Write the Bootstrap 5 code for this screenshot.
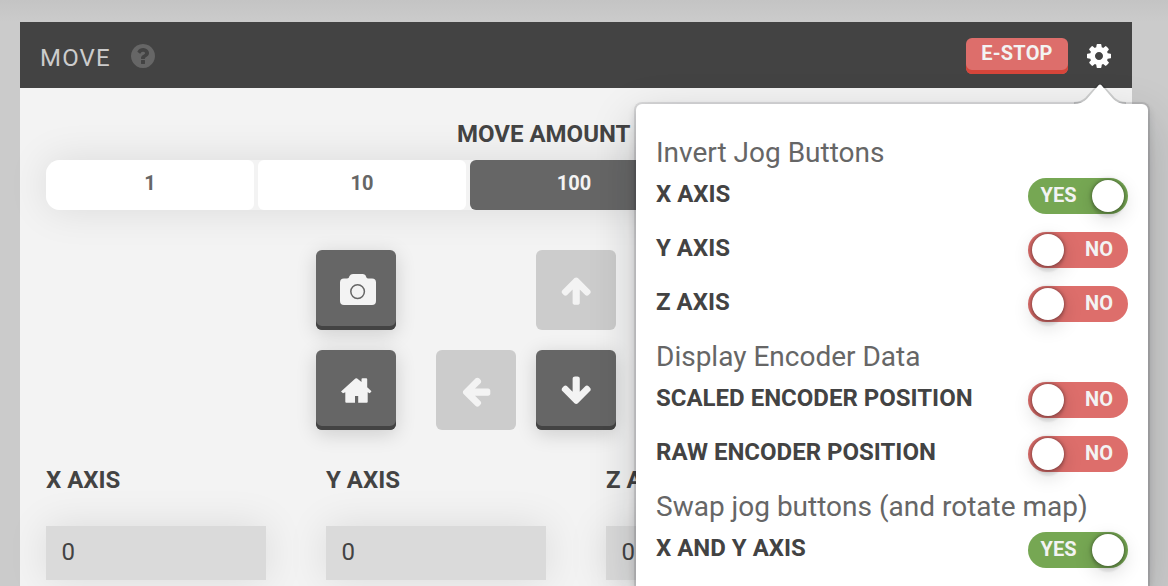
<!DOCTYPE html>
<html lang="en">
<head>
<meta charset="utf-8">
<meta name="viewport" content="width=device-width, initial-scale=1">
<title>Move</title>
<link rel="stylesheet" href="https://cdn.jsdelivr.net/npm/bootstrap@5.3.0/dist/css/bootstrap.min.css">
<style>
body{font-family:Roboto,"Liberation Sans",sans-serif;background:linear-gradient(#c4c4c4,#cbcbcb 22px,#cbcbcb);color:#434343;height:586px;font-size:24px;line-height:36px}
.widget{width:1112px;height:564px;margin:22px 0 0 20px;background:#f3f3f3}
.widget-header{height:66px;background:#434343;padding:0 21px 0 20px}
.widget-title{color:#ccc;letter-spacing:1.2px;padding-top:5px}
.help{margin:2px 0 0 20px}
.estop{width:102px;height:36px;border:0;border-radius:6px;background:#dd6e6b;box-shadow:inset 0 -4px 0 #d6453a;color:#f3f3f3;font-size:20px;font-weight:700;line-height:30px;letter-spacing:.2px;padding:0 0 6px;margin-top:1px}
.gear{position:relative;margin:2px 0 0 19px;width:24px;height:24px}
.gear>svg{display:block}
.widget-body{padding:0 26px}
.amount-title{padding:28px 0 0 411px;font-weight:700}
.amounts{gap:4px;margin-top:8px;width:1056px;box-shadow:0 0 40px rgba(0,0,0,.1);border-radius:14px}
.amount{flex:1;height:50px;background:#fff;border:0;border-radius:6px;color:#666;font-size:20px;font-weight:700;line-height:46px;text-align:center}
.amount:first-child{border-radius:14px 6px 6px 14px}
.amount:last-child{border-radius:6px 14px 14px 6px}
.amount.chosen{background:#666;color:#f3f3f3}
.jog{display:grid;grid-template-columns:80px 0 80px 80px 80px;gap:20px;margin:40px 0 0 270px}
.jog-btn{width:80px;height:80px;border:0;padding:0;border-radius:6px;background:#666;box-shadow:inset 0 -4px 0 #434343,0 4px 20px rgba(0,0,0,.16);color:#f3f3f3}
.jog-btn svg{display:block}
.jog-btn.off{background:#ccc;box-shadow:none}
.axes{gap:60px;margin-top:32px}
.axis{width:220px;font-weight:700}
.axis-value{height:54px;margin-top:28px;background:#dadada;box-shadow:0 0 40px rgba(0,0,0,.1);font-weight:400;padding-left:15.5px;line-height:52px}
.settings{position:absolute;left:-451px;top:60px;width:512px;height:482px;background:#fff;border-radius:6px 6px 0 0;padding:14px 20px 0;box-shadow:0 0 0 2px rgba(16,22,26,.1),0 4px 8px rgba(16,22,26,.2),0 16px 48px rgba(16,22,26,.2);z-index:5}
.tip{position:absolute;top:-22px;right:17px;z-index:1}
.settings h2{font-size:28px;font-weight:400;line-height:42px;margin:14px 0 4px;color:#666}
.settings .setting+h2{margin-top:-4px}
.setting{height:36px;font-weight:700;margin-bottom:18px}
.setting>span{line-height:32px}
.setting:last-child{margin-bottom:0}
.sw{position:relative;width:100px;height:36px;border-radius:18px;background:#dd6e6b;color:#f3f3f3;font-size:20px;font-weight:700;line-height:34px;padding:0 15px;text-align:right}
.sw::after{content:"";position:absolute;left:4px;top:2px;width:32px;height:32px;border-radius:50%;background:#fff;box-shadow:0 0 4px rgba(0,0,0,.5),0 6px 2px rgba(0,0,0,.07),0 6px 20px rgba(0,0,0,.16)}
.sw.yes{background:#76a753;text-align:left;padding-left:12.5px}
.sw.yes::after{left:64px}
</style>
<script src="https://cdn.jsdelivr.net/npm/bootstrap@5.3.0/dist/js/bootstrap.bundle.min.js"></script>
</head>
<body class="overflow-hidden">
<svg width="0" height="0" class="position-absolute">
<symbol id="arrow" viewBox="0 0 1792 1792"><path fill="currentColor" d="M1675 971q0 51-37 90l-75 75q-38 38-91 38-54 0-90-38l-294-293v704q0 52-37.500 84.500t-90.500 32.500h-128q-53 0-90.500-32.500t-37.500-84.500v-704l-294 293q-36 38-90 38t-90-38l-75-75q-38-38-38-90 0-53 38-91l651-651q35-37 90-37 54 0 91 37l651 651q37 39 37 91z"/></symbol>
</svg>
<main class="widget">
<header class="widget-header d-flex align-items-center">
<span class="widget-title">MOVE</span>
<svg class="help" width="24" height="24" viewBox="128 128 1536 1536"><path fill="#666" d="M1024 1376v-192q0-14-9-23t-23-9h-192q-14 0-23 9t-9 23v192q0 14 9 23t23 9h192q14 0 23-9t9-23zm256-672q0-88-55.500-163t-138.500-116-170-41q-243 0-371 213-15 24 8 42l132 100q7 6 19 6 16 0 25-12 53-68 86-92 34-24 86-24 48 0 85.500 26t37.500 59q0 38-20 61t-68 45q-63 28-115.500 86.500t-52.500 125.500v36q0 14 9 23t23 9h192q14 0 23-9t9-23q0-19 21.500-49.500t54.500-49.500q32-18 49-28.500t46-35 44.500-48 28-60.500 12.500-81zm384 192q0 209-103 385.500t-279.500 279.500-385.500 103-385.500-103-279.500-279.500-103-385.500 103-385.500 279.500-279.500 385.500-103 385.500 103 279.500 279.500 103 385.500z"/></svg>
<button class="estop ms-auto">E-STOP</button>
<div class="gear">
<svg width="24" height="24" viewBox="128 128 1536 1536"><path fill="#fff" d="M1152 896q0-106-75-181t-181-75-181 75-75 181 75 181 181 75 181-75 75-181zm512-109v222q0 12-8 23t-20 13l-185 28q-19 54-39 91 35 50 107 138 10 12 10 25t-9 23q-27 37-99 108t-94 71q-12 0-26-9l-138-108q-44 23-91 38-16 136-29 186-7 28-36 28h-222q-14 0-24.500-8.500t-11.500-21.500l-28-184q-49-16-90-37l-141 107q-10 9-25 9-14 0-25-11-126-114-165-168-7-10-7-23 0-12 8-23 15-21 51-66.500t54-70.500q-27-50-41-99l-183-27q-13-2-21-12.500t-8-23.500v-222q0-12 8-23t19-13l186-28q14-46 39-92-40-57-107-138-10-12-10-24 0-10 9-23 26-36 98.500-107.500t94.500-71.500q13 0 26 10l138 107q44-23 91-38 16-136 29-186 7-28 36-28h222q14 0 24.500 8.500t11.500 21.500l28 184q49 16 90 37l142-107q9-9 24-9 13 0 25 10 129 119 165 170 7 8 7 22 0 12-8 23-15 21-51 66.500t-54 70.500q26 50 41 98l183 28q13 2 21 12.500t8 23.500z"/></svg>
<section class="settings">
<svg class="tip" width="62" height="24" viewBox="0 0 62 24"><path d="M5 21Q12 21 17 16.500L28.300 4Q31 1 33.700 4L45 16.500Q50 21 57 21" fill="none" stroke="#10161a" stroke-opacity=".17" stroke-width="2"/><path d="M5 24V22Q13 22 18 17L28.500 4.500Q31 .500 33.500 4.500L44 17Q49 22 57 22V24Z" fill="#fff"/></svg>
<h2>Invert Jog Buttons</h2>
<div class="setting d-flex justify-content-between"><span>X AXIS</span><div class="sw yes">YES</div></div>
<div class="setting d-flex justify-content-between"><span>Y AXIS</span><div class="sw">NO</div></div>
<div class="setting d-flex justify-content-between"><span>Z AXIS</span><div class="sw">NO</div></div>
<h2>Display Encoder Data</h2>
<div class="setting d-flex justify-content-between"><span>SCALED ENCODER POSITION</span><div class="sw">NO</div></div>
<div class="setting d-flex justify-content-between"><span>RAW ENCODER POSITION</span><div class="sw">NO</div></div>
<h2>Swap jog buttons (and rotate map)</h2>
<div class="setting d-flex justify-content-between"><span>X AND Y AXIS</span><div class="sw yes">YES</div></div>
</section>
</div>
</header>
<div class="widget-body">
<div class="amount-title">MOVE AMOUNT</div>
<div class="amounts d-flex"><div class="amount">1</div><div class="amount">10</div><div class="amount chosen">100</div><div class="amount"></div><div class="amount"></div></div>
<div class="jog">
<button class="jog-btn" aria-label="Photo"><svg width="80" height="80"><path d="M28 28.500h3q2 0 2.500-2.500 1-2 3.500-2h9.500q3 0 3.500 2.500.5 2 2 2h4q4 0 4 4V51q0 4-4 4H28q-4 0-4-4V32.500q0-4 4-4z" fill="#f3f3f3"/><circle cx="41.600" cy="41.600" r="6.800" fill="none" stroke="#666" stroke-width="1.500"/></svg></button>
<span></span><span></span>
<button class="jog-btn off" aria-label="Up"><svg width="80" height="80"><use href="#arrow" x="23.500" y="23.800" width="33.400" height="33.400"/></svg></button>
<span></span>
<button class="jog-btn" aria-label="Home"><svg width="80" height="80"><path d="M25 41.500 38.500 29.200Q40.300 27.500 42.100 29.200L45.500 32V29.300Q45.500 28.300 46.500 28.300H50.200Q51.200 28.300 51.200 29.300V37.300L55.500 41.300 53.800 43.300 51.700 42.300V51.700Q51.700 52.700 50.700 52.700H42.200V46H39V52.700H30.300Q29.300 52.700 29.300 51.700V42.300L27 43.300Z" fill="#f3f3f3"/></svg></button>
<span></span>
<button class="jog-btn off" aria-label="Left"><svg width="80" height="80"><use href="#arrow" x="23.500" y="23.500" width="33.400" height="33.400" transform="rotate(-90 41.100 41.300)"/></svg></button>
<button class="jog-btn" aria-label="Down"><svg width="80" height="80"><use href="#arrow" x="23.500" y="23.500" width="33.400" height="33.400" transform="rotate(180 40.200 40.500)"/></svg></button>
<button class="jog-btn off" aria-label="Right"></button>
</div>
<div class="axes d-flex">
<div class="axis"><span>X AXIS</span><div class="axis-value">0</div></div>
<div class="axis"><span>Y AXIS</span><div class="axis-value">0</div></div>
<div class="axis"><span>Z AXIS</span><div class="axis-value">0</div></div>
</div>
</div>
</main>
</body>
</html>
